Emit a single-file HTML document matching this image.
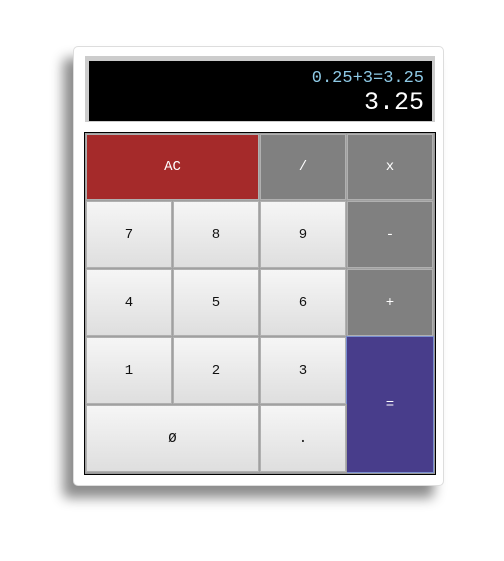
<!DOCTYPE html>
<html><head><style>
body{margin:0;width:504px;height:561px;background:#fff;position:relative;overflow:hidden;font-family:"Liberation Mono",monospace}
.card{position:absolute;left:73px;top:46px;width:371px;height:440px;background:#fff;border-radius:5px;box-shadow:-10px 12px 12px rgba(0,0,0,.45);border:1px solid #ddd;box-sizing:border-box}
.disp{position:absolute;left:85px;top:56px;width:350px;height:66px;background:#ccc}
.scr{position:absolute;left:89px;top:61px;width:343px;height:60px;background:#000;text-align:right}
.l1{position:absolute;right:8px;top:8px;color:#8ecae6;font-size:17px;letter-spacing:0px}
.l2{position:absolute;right:8px;top:27px;color:#fff;font-size:25px}
.grid{position:absolute;left:84px;top:132px;width:350px;height:341px;border:1px solid #000;background:#999}
.b{position:absolute;box-sizing:border-box;border:1px solid #a0a0a0;box-shadow:inset 0 0 0 1px #b0b0b0;display:flex;align-items:center;justify-content:center;font-size:14px;color:#111;background:linear-gradient(#f6f6f6,#dedede)}
.g{background:#808080;color:#fff}
.r{background:#a52a2a;color:#fff}
.p{background:#483d8b;color:#fff;border-color:#7a8fd0;box-shadow:none}
</style></head><body>
<div class="card"></div>
<div class="disp"></div>
<div class="scr"><div class="l1">0.25+3=3.25</div><div class="l2">3.25</div></div>
<div class="grid">
<div class="b r" style="left:0;top:0;width:175px;height:68px">AC</div>
<div class="b g" style="left:174px;top:0;width:88px;height:68px">/</div>
<div class="b g" style="left:261px;top:0;width:88px;height:68px">x</div>
<div class="b" style="left:0;top:67px;width:88px;height:69px">7</div>
<div class="b" style="left:87px;top:67px;width:88px;height:69px">8</div>
<div class="b" style="left:174px;top:67px;width:88px;height:69px">9</div>
<div class="b g" style="left:261px;top:67px;width:88px;height:69px">-</div>
<div class="b" style="left:0;top:135px;width:88px;height:69px">4</div>
<div class="b" style="left:87px;top:135px;width:88px;height:69px">5</div>
<div class="b" style="left:174px;top:135px;width:88px;height:69px">6</div>
<div class="b g" style="left:261px;top:135px;width:88px;height:69px">+</div>
<div class="b" style="left:0;top:203px;width:88px;height:69px">1</div>
<div class="b" style="left:87px;top:203px;width:88px;height:69px">2</div>
<div class="b" style="left:174px;top:203px;width:88px;height:69px">3</div>
<div class="b p" style="left:261px;top:203px;width:88px;height:137px">=</div>
<div class="b" style="left:0;top:271px;width:175px;height:69px">Ø</div>
<div class="b" style="left:174px;top:271px;width:88px;height:69px">.</div>
</div>
</body></html>
